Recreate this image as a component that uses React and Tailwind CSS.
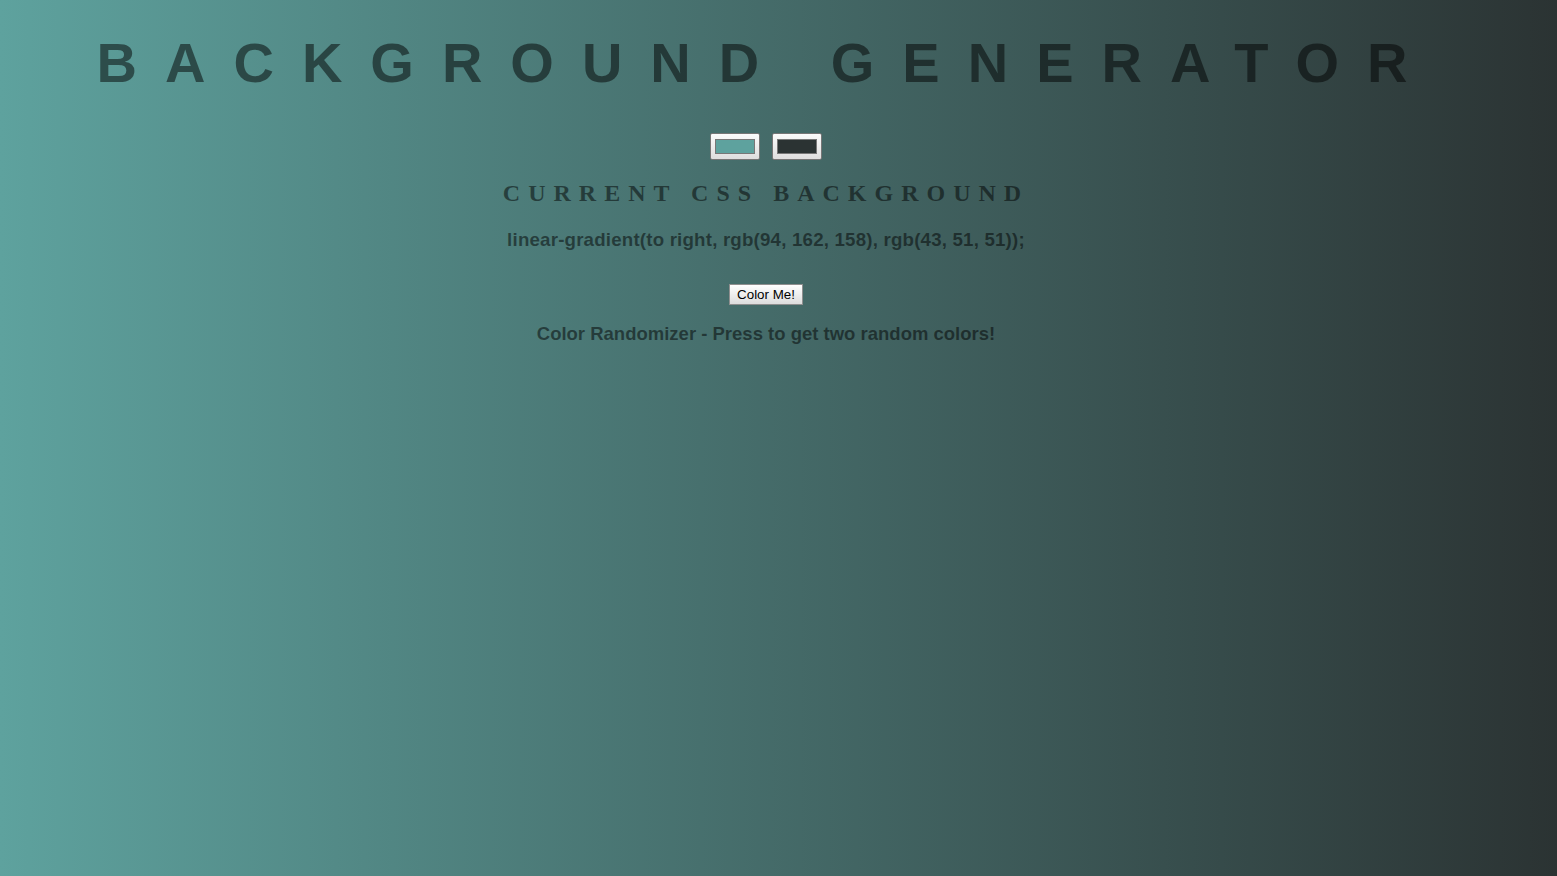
import { useState } from "react";

// Background Generator: two colour pickers drive a left-to-right gradient.
function toRgb(hex) {
  const n = parseInt(hex.slice(1), 16);
  return `rgb(${(n >> 16) & 255}, ${(n >> 8) & 255}, ${n & 255})`;
}

function randomHex() {
  return (
    "#" +
    Math.floor(Math.random() * 0xffffff)
      .toString(16)
      .padStart(6, "0")
  );
}

function ColorInput({ value, onChange }) {
  return (
    <input
      type="color"
      value={value}
      onChange={(e) => onChange(e.target.value)}
      className="block w-[50px] h-[27px] border border-[#767676] rounded-[2px] bg-gradient-to-b from-[#fbfbfb] to-[#dedede] px-[2px] py-[1px] cursor-pointer"
    />
  );
}

export default function App() {
  const [color1, setColor1] = useState("#5ea29e");
  const [color2, setColor2] = useState("#2b3333");

  const css = `linear-gradient(to right, ${toRgb(color1)}, ${toRgb(color2)})`;

  const randomize = () => {
    setColor1(randomHex());
    setColor2(randomHex());
  };

  return (
    <div
      className="min-h-screen w-full pr-[25px] text-center text-black/50 font-['Liberation_Sans',Arial,sans-serif]"
      style={{ background: css }}
    >
      <div className="flex flex-col items-center pt-[31px]">
        {/* Title */}
        <h1 className="text-[56px] leading-[64px] font-bold uppercase tracking-[0.5em] whitespace-nowrap">
          Background Generator
        </h1>

        {/* Colour pickers */}
        <div className="mt-[38px] flex gap-3">
          <ColorInput value={color1} onChange={setColor1} />
          <ColorInput value={color2} onChange={setColor2} />
        </div>

        <h2 className="mt-[19px] text-[24px] leading-[28px] font-bold uppercase tracking-[8px] font-['Liberation_Serif','Times_New_Roman',serif]">
          Current CSS Background
        </h2>

        <h3 className="mt-[22px] text-[18.72px] leading-[22px] font-bold tracking-[0.01em]">
          {css};
        </h3>

        <button
          onClick={randomize}
          className="mt-[33px] h-[21px] border border-[#8f8f8f] bg-gradient-to-b from-white to-[#dddddd] px-[7px] text-[13.33px] leading-[19px] text-black"
        >
          Color Me!
        </button>

        <p className="mt-[18px] text-[18.5px] leading-[21px] font-bold">
          Color Randomizer - Press to get two random colors!
        </p>
      </div>
    </div>
  );
}
